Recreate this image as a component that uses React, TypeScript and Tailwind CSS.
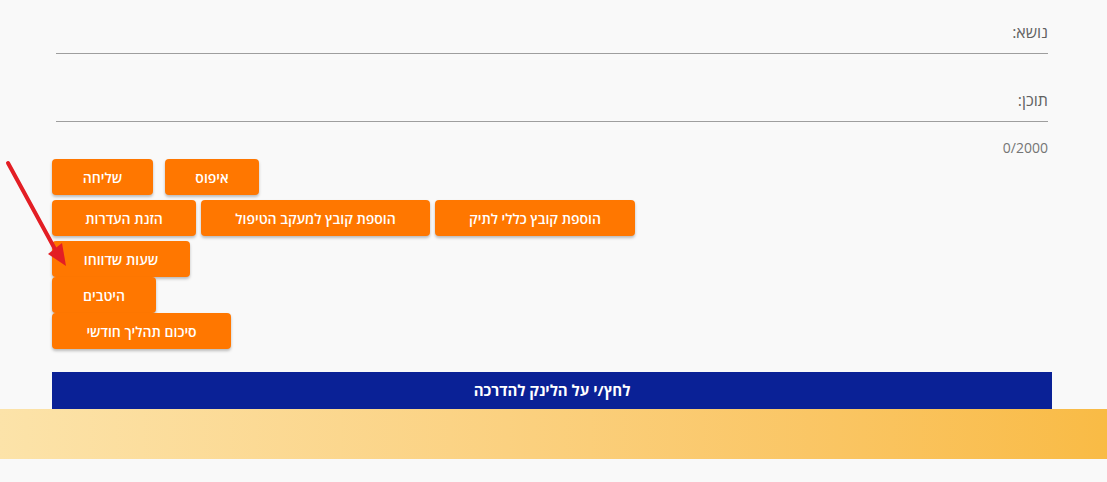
import { ReactNode } from "react";

const font = { fontFamily: '"Open Sans", "DejaVu Sans", sans-serif' };

function OrangeButton({ children, width }: { children: ReactNode; width: string }) {
  return (
    <button
      type="button"
      className={`flex h-[36px] items-center justify-center rounded-[4px] bg-[#ff7700] text-[14px] font-semibold text-white shadow-[0_2px_3px_rgba(0,0,0,0.25)] ${width}`}
      dir="rtl"
    >
      {children}
    </button>
  );
}

function Field({ label }: { label: string }) {
  return (
    <div dir="rtl" className="h-[68px] px-[4px] pt-[21px]">
      <div className="border-b border-[#9e9e9e] pb-[10px] text-[16px] leading-[22px] text-[#616161]">
        {label}
      </div>
    </div>
  );
}

export default function App() {
  return (
    <div className="relative min-h-[482px] w-full bg-[#f9f9f9]" style={font}>
      <div className="pl-[52px] pr-[55px]">
        <Field label="נושא:" />
        <Field label="תוכן:" />
        <div dir="rtl" className="px-[4px] pt-[2px] text-[14px] leading-[20px] text-[#757575]">
          0/2000
        </div>

        <div className="mt-[1px] flex flex-col gap-[5px]">
          <div className="flex gap-[12px]">
            <OrangeButton width="w-[101px]">שליחה</OrangeButton>
            <OrangeButton width="w-[94px]">איפוס</OrangeButton>
          </div>
          <div className="flex gap-[5px]">
            <OrangeButton width="w-[144px]">הזנת העדרות</OrangeButton>
            <OrangeButton width="w-[229px]">הוספת קובץ למעקב הטיפול</OrangeButton>
            <OrangeButton width="w-[200px]">הוספת קובץ כללי לתיק</OrangeButton>
          </div>
          <div className="flex flex-col gap-0">
            <OrangeButton width="w-[138px]">שעות שדווחו</OrangeButton>
            <OrangeButton width="w-[104px]">היטבים</OrangeButton>
            <OrangeButton width="w-[179px]">סיכום תהליך חודשי</OrangeButton>
          </div>
        </div>

        <div
          dir="rtl"
          className="mt-[23px] flex h-[37px] items-center justify-center bg-[#0a2196] text-[15px] font-bold text-white"
        >
          לחץ/י על הלינק להדרכה
        </div>
      </div>

      <div className="h-[50px] w-full bg-gradient-to-r from-[#fce3a9] to-[#f9bb45]" />

      <svg
        className="pointer-events-none absolute left-0 top-0"
        width="80"
        height="280"
        viewBox="0 0 80 280"
      >
        <line x1="8" y1="163" x2="56" y2="251" stroke="#e31e24" strokeWidth="4" strokeLinecap="round" />
        <polygon points="66,266 48,254 62,243" fill="#e31e24" />
      </svg>
    </div>
  );
}
